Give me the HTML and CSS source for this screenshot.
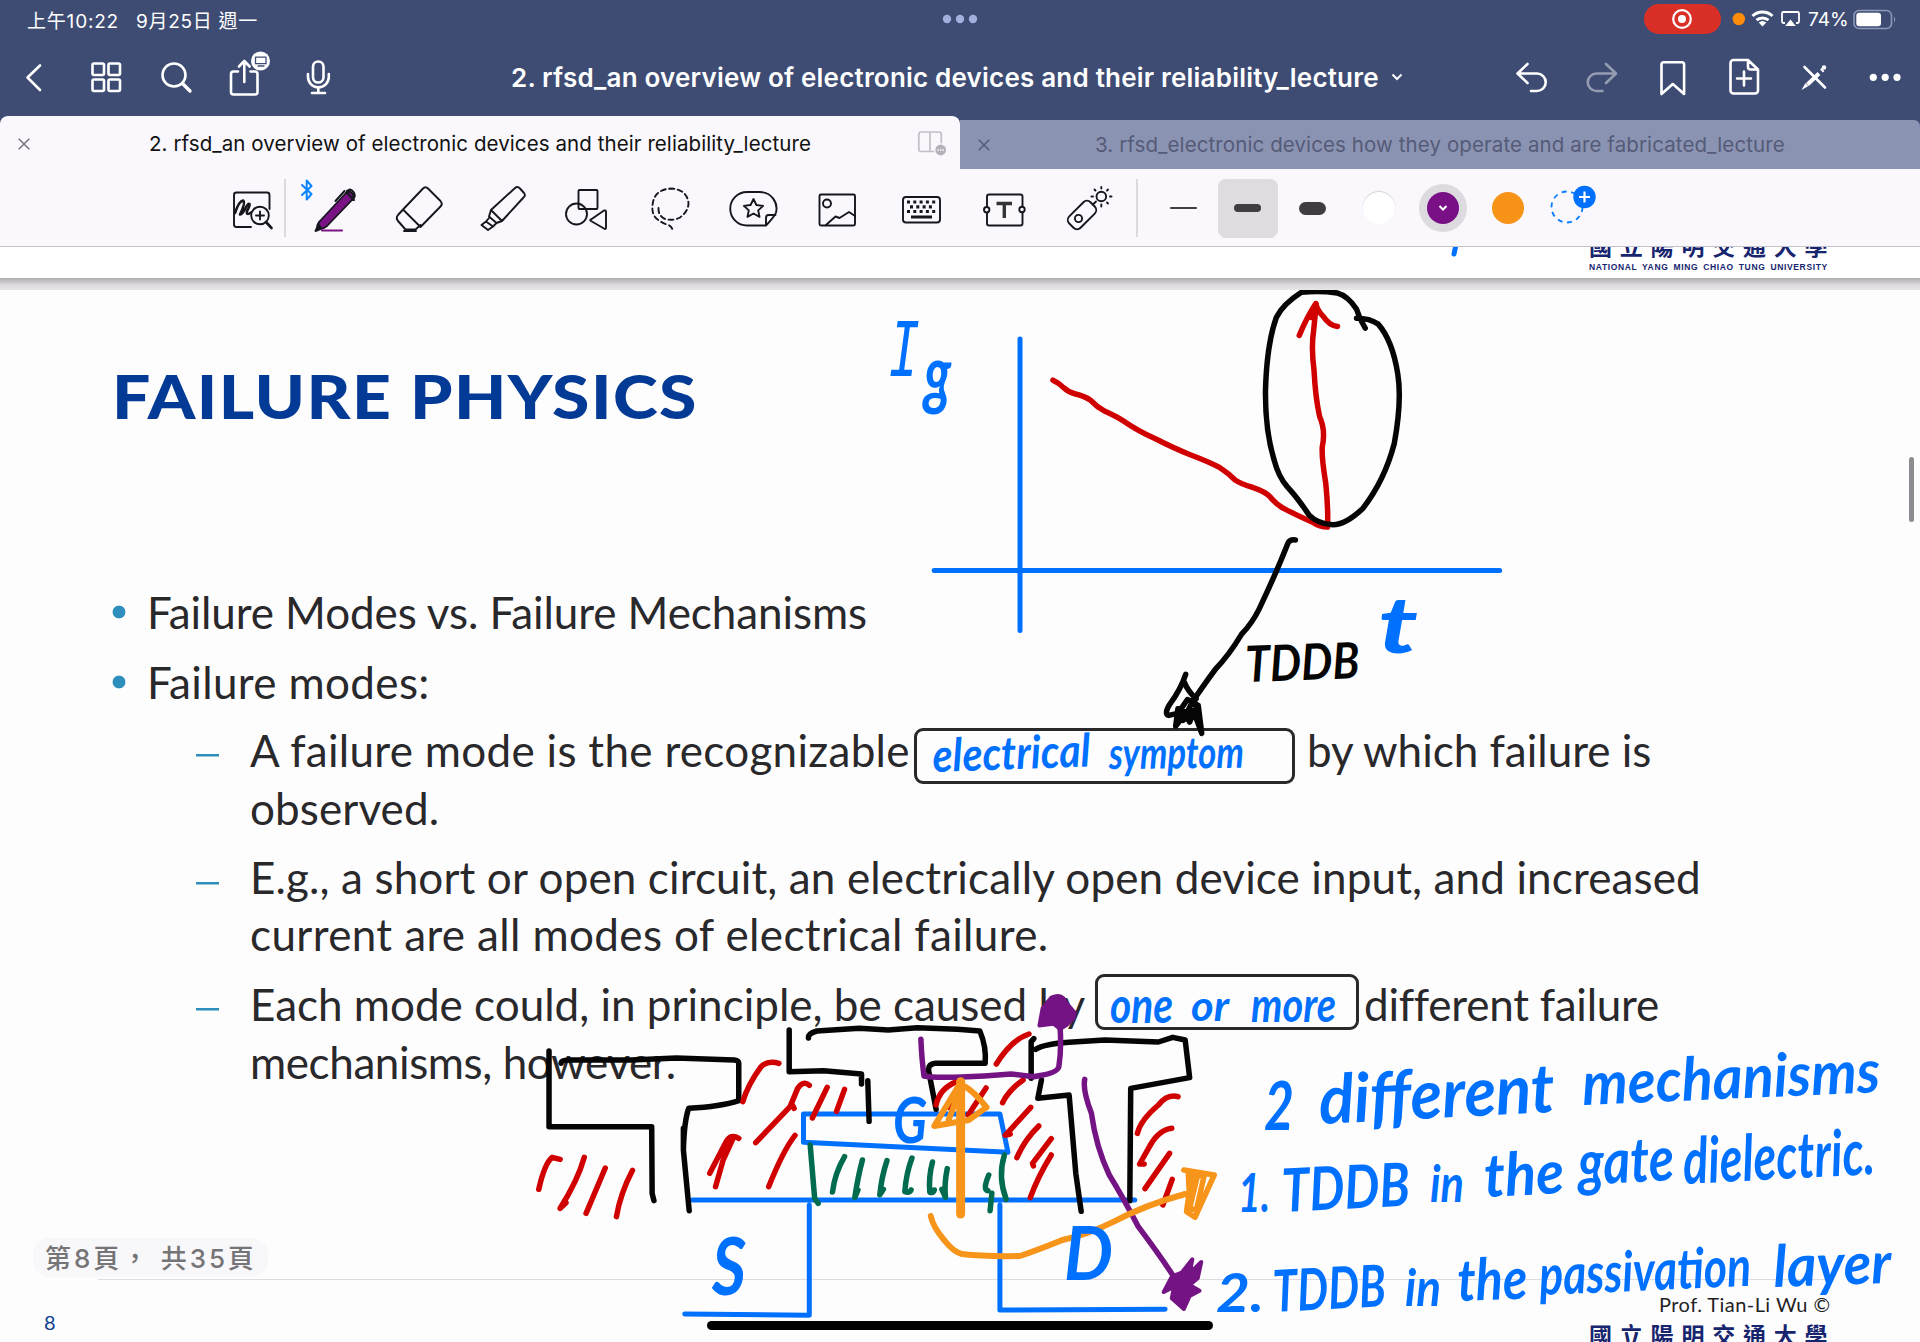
FILE: index.html
```html
<!DOCTYPE html>
<html lang="zh-Hant">
<head>
<meta charset="utf-8">
<title>2. rfsd_an overview of electronic devices and their reliability_lecture</title>
<link rel="stylesheet" href="styles.css">
</head>
<body>
<header class="topbar">
  <div class="status">
    <span class="clock">上午10:22</span><span class="date">9月25日 週一</span>
    <svg class="dots" viewBox="940 12 40 14" width="40" height="14" fill="#a3afdc"><circle cx="947" cy="19" r="4.2"/><circle cx="960" cy="19" r="4.2"/><circle cx="973" cy="19" r="4.2"/></svg>
    <span class="record"><svg viewBox="0 0 20 20" width="20" height="20"><circle cx="10" cy="10" r="8.8" fill="none" stroke="#fff" stroke-width="2.2"/><circle cx="10" cy="10" r="4" fill="#fff"/></svg></span>
    <svg class="signals" viewBox="1732 6 70 28" width="70" height="28">
      <circle cx="1738.8" cy="20" r="6.2" fill="#ff8c0a"/>
      <g fill="none" stroke="#fff" stroke-width="3"><path d="M1752.5 17a14.5 14.5 0 0 1 20 0"/><path d="M1756.5 21.2a9 9 0 0 1 12 0"/></g>
      <path d="M1758.700 23.600a6 6 0 0 1 7.600 0L1762.500 27.600z" fill="#fff"/>
      <path d="M1785 24h-1.500a1.500 1.500 0 0 1-1.500-1.500v-8a1.500 1.500 0 0 1 1.500-1.500h14a1.500 1.500 0 0 1 1.500 1.500v8a1.500 1.500 0 0 1-1.500 1.500h-1.500" fill="none" stroke="#fff" stroke-width="1.800"/>
      <path d="M1790.500 20.500l5.300 6.500h-10.600z" fill="#fff"/>
    </svg>
    <span class="percent">74%</span>
    <svg class="battery" viewBox="1852 9 46 21" width="46" height="21"><rect x="1854" y="10.500" width="37.500" height="18" rx="5" fill="none" stroke="#8f98b5" stroke-width="1.600"/><rect x="1856.300" y="12.800" width="24.700" height="13.400" rx="3" fill="#fff"/><path d="M1894 16.500q2.500 3 0 6z" fill="#8f98b5"/></svg>
  </div>
  <nav class="nav">
    <svg class="left-icons" viewBox="20 48 320 58" width="320" height="58" fill="none" stroke="#fff" stroke-width="2.600" stroke-linecap="round" stroke-linejoin="round">
      <path d="M40 65.500L27.500 77.500L40 90"/>
      <rect x="92.500" y="63.500" width="11.500" height="11.500" rx="1.500"/><rect x="108.500" y="63.500" width="11.500" height="11.500" rx="1.500"/><rect x="92.500" y="79.500" width="11.500" height="11.500" rx="1.500"/><rect x="108.500" y="79.500" width="11.500" height="11.500" rx="1.500"/>
      <circle cx="174" cy="75" r="11.500"/><path d="M182.500 83.500L190 91" stroke-width="3.400"/>
      <path d="M238 71.500h-4.500a2.500 2.500 0 0 0-2.500 2.500v18a2.500 2.500 0 0 0 2.500 2.500h21.500a2.500 2.500 0 0 0 2.500-2.500V74a2.500 2.500 0 0 0-2.500-2.500h-4.500M244.300 82V62M239 66.500L244.300 61L249.600 66.500"/>
      <circle cx="260.500" cy="61" r="9.500" fill="#fff" stroke="none"/><g stroke="#3e4c74" stroke-width="1.300"><rect x="255.500" y="57.200" width="10.500" height="6.500"/><path d="M258 66h6"/></g>
      <rect x="313" y="61.500" width="10.500" height="21" rx="5.250"/><path d="M308 74v3a10.400 10.400 0 0 0 20.800 0v-3M318.300 88v5M312 93h13"/>
    </svg>
    <h1 class="title">2. rfsd_an overview of electronic devices and their reliability_lecture</h1>
    <svg class="chev" viewBox="0 0 12 8" width="12" height="8" fill="none" stroke="#fff" stroke-width="2"><path d="M1.500 1.500L6 6l4.500-4.500"/></svg>
    <svg class="right-icons" viewBox="1505 48 405 58" width="405" height="58" fill="none" stroke="#fff" stroke-width="2.600" stroke-linecap="round" stroke-linejoin="round">
      <path d="M1527.500 64L1517.500 73.500L1527.500 83M1518 73.500h19a8.500 8.500 0 0 1 0 17.500h-6"/>
      <path opacity=".45" d="M1606 64L1616 73.500L1606 83M1615.500 73.500h-19a8.500 8.500 0 0 0 0 17.500h6"/>
      <path d="M1661.500 94V64.500a2.300 2.300 0 0 1 2.300-2.300h18a2.300 2.300 0 0 1 2.300 2.300V94L1672.800 84z"/>
      <path d="M1748 60h-14.500a3 3 0 0 0-3 3v27.500a3 3 0 0 0 3 3H1755a3 3 0 0 0 3-3V69.500zM1748 60v7a2.500 2.500 0 0 0 2.500 2.500h7.500M1744 71.500v14M1737 78.500h14"/>
      <path d="M1804.500 67L1825 87.500"/><path d="M1807.500 84.500L1819 73.500M1821.500 71L1823 69.500" stroke-width="4" stroke-linecap="butt"/><circle cx="1824" cy="67.500" r="2.200" fill="#fff" stroke="none"/><path d="M1805.500 83l3 3l-7 4z" fill="#fff" stroke="none"/>
      <g fill="#fff" stroke="none"><circle cx="1873.300" cy="77.300" r="3.600"/><circle cx="1885.200" cy="77.300" r="3.600"/><circle cx="1897" cy="77.300" r="3.600"/></g>
    </svg>
  </nav>
  <div class="tabs">
    <div class="tab active">
      <svg viewBox="0 0 12 12" width="12" height="12" stroke="#77757b" stroke-width="1.500"><path d="M.7.700l10.600 10.600M11.300.7L.7 11.300"/></svg>
      <span>2. rfsd_an overview of electronic devices and their reliability_lecture</span>
      <svg class="split" viewBox="918 129 32 30" width="32" height="30" fill="none" stroke="#c2c0c6" stroke-width="1.700"><rect x="920.800" y="132" width="22.500" height="19.500" rx="2.500"/><path d="M932 132v19"/><circle cx="942.700" cy="150" r="6.800" fill="#faf8fc" stroke="none"/><circle cx="942.700" cy="150" r="5.400" fill="#b4b2b8" stroke="none"/><path d="M939.500 150h1.400m1.100 0h1.400m1.100 0h1.400" stroke="#fff"/></svg>
    </div>
    <div class="tab idle">
      <svg viewBox="0 0 12 12" width="12" height="12" stroke="#555c7a" stroke-width="1.500"><path d="M.7.700l10.600 10.600M11.300.7L.7 11.300"/></svg>
      <span>3. rfsd_electronic devices how they operate and are fabricated_lecture</span>
    </div>
  </div>
</header>

<div class="tools">
  <svg class="tool first" viewBox="222 178 60 60"><path d="M251 227h-14.500a2.500 2.500 0 0 1-2.500-2.500v-29.500a2.500 2.500 0 0 1 2.500-2.500h30.500a2.500 2.500 0 0 1 2.500 2.500V209"/><path d="M235 213Q239 201 243 200.500Q246 202 240 214.500Q242 215 245 209Q248 203 249.500 204Q250 206 247 211Q246 216 251 212.500" stroke-width="2.600"/><circle cx="260" cy="215.500" r="8.800" fill="#faf8fc"/><path d="M266 222l5.500 6" stroke-width="2.600"/><path d="M256 215.500h8M260 211.500v8"/></svg>
  <i class="divider"></i>
  <svg class="tool" viewBox="306 178 60 60"><path d="M302 185l9.500 9-4.800 5.500v-19l4.800 5.500-9.500 9" stroke="#0a84ff" stroke-width="2"/><path d="M318 229Q316 225 320 221L345 194Q348 190 352 193Q355 196 352 200L327 226Q322 230 318 229Z" fill="#7a1285" stroke-width="1.800"/><path d="M318.500 224.500L315.500 231l6-2.500z" fill="#111"/><path d="M346.500 192.500l7.500 7.500M347 191l3-1.500q5 2 4.700 7l-2 3.500M335.500 201l9-10" stroke-width="2"/><path d="M322 230.500h20" stroke="#7a1285" stroke-width="2"/></svg>
  <svg class="tool" viewBox="390 178 60 60"><path d="M403 209.500L423 188.500Q425.500 186 428 188.500L440.500 201Q443 204 440.500 206.500L420.500 227zM403 209.500L398 215Q395.500 218 398 221L405.500 229.500H415.500L420.500 225M404 231h12"/></svg>
  <svg class="tool" viewBox="474 178 60 60"><path d="M491 210L515 188Q517.500 186 520 188.500L524 193Q526 195.500 523.500 197.500L502 221zM491 210L489 216.500L496.500 223L502 221M489 218L486 221.500M496.500 223L493 226.500M486 221.500L481.500 225L488 230L493 226.500z"/></svg>
  <svg class="tool" viewBox="558 178 60 60"><rect x="578.500" y="190" width="19" height="19" rx="1"/><circle cx="576.500" cy="214" r="10.500"/><path d="M591 219.500L604 210.500Q606 210 606 212V227.500Q606 230 604 228.500L591 221Q589.500 220 591 219.500Z"/></svg>
  <svg class="tool" viewBox="642 178 60 60"><path d="M658.500 208Q658 215 664 218.500Q672 221.500 680 217.500Q688.500 211 688.500 203Q687 190 672 188.500Q657 189 653.500 200Q650 213 657 219Q662 223 667 224.500Q672 226 672.500 230" stroke-dasharray="5 3.500"/></svg>
  <svg class="tool" viewBox="726 178 60 60"><path d="M766 225.500H747a16.500 16.500 0 0 1 0-33.500h13a16.500 16.500 0 0 1 16 20.500Q775 216 766 225.500zM766 225.500V218q0-3 2.500-3h7M753.500 199l2.900 6 6.700.9-4.900 4.500 1.300 6.400-6-3.300-6 3.300 1.300-6.400-4.900-4.500 6.700-.9z"/></svg>
  <svg class="tool" viewBox="810 178 60 60"><rect x="819.500" y="194.500" width="35.500" height="31" rx="1.500"/><circle cx="827" cy="203.500" r="4"/><path d="M826 225l9.500-8.500 4 1.500 9.500-6 6 4"/></svg>
  <svg class="tool" viewBox="894 178 60 60"><rect x="903" y="197" width="37" height="25.500" rx="3"/><path d="M907 202h28.500M907 211.500h28.500" stroke-dasharray="3 3.300" stroke-width="3.200" stroke-linecap="butt"/><path d="M910 206.800h24" stroke-dasharray="3 3.300" stroke-width="3.200" stroke-linecap="butt"/><path d="M911 217h21" stroke-width="3" stroke-linecap="butt"/></svg>
  <svg class="tool" viewBox="978 178 60 60"><path d="M987 206v-9.500a2 2 0 0 1 2-2h31.500a2 2 0 0 1 2 2V206M987 213v10.500a2 2 0 0 0 2 2h31.500a2 2 0 0 0 2-2V213"/><circle cx="986.700" cy="209.700" r="2.700"/><circle cx="1022" cy="209.500" r="2.700"/><path d="M996.500 203.500h15.500M1004.300 203.500v14.500" stroke-width="3.400" stroke-linecap="butt" stroke="#333"/></svg>
  <svg class="tool" viewBox="1062 178 60 60"><rect x="1067" y="207" width="30" height="16" rx="5" transform="rotate(-45 1082 215)"/><circle cx="1078.500" cy="218.500" r="3.600"/><circle cx="1101.300" cy="196.500" r="4.800"/><path d="M1101.300 187v1.500M1101.300 204.500v2M1091.500 196.500h1.500M1110 196.500h1.500M1094.500 189.500l1 1M1108 189.500l-1 1M1108 203.500l-1-1M1096 201.500l-3 3"/></svg>
  <i class="divider second"></i>
  <span class="width thin"><b></b></span><span class="width mid"><b></b></span><span class="width thick"><b></b></span>
  <span class="swatch white"><b></b></span>
  <span class="swatch purple"><b><svg viewBox="0 0 10 8" width="10" height="8" fill="none" stroke="#fff" stroke-width="2"><path d="M1.500 2L5 5.500L8.500 2"/></svg></b></span>
  <span class="swatch orange"><b></b></span>
  <svg class="add" viewBox="1549 178 60 60" width="60" height="60"><circle cx="1568" cy="207" r="15.500" fill="none" stroke="#0a7cff" stroke-width="1.800" stroke-dasharray="5 4.600"/><circle cx="1585.500" cy="197" r="11.200" fill="#0070ff"/><path d="M1580 197h11M1585.500 191.500v11" stroke="#fff" stroke-width="2.200"/></svg>
</div>

<section class="previous">
  <svg class="tick" viewBox="0 0 8 12" width="8" height="12"><path d="M5 -2L3 7" stroke="#0070ff" stroke-width="5" stroke-linecap="round"/></svg>
  <div class="logo"><span class="zh">國立陽明交通大學</span><span class="en">NATIONAL YANG MING CHIAO TUNG UNIVERSITY</span></div>
</section>
<div class="gap"></div>

<main class="slide">
  <h2>FAILURE PHYSICS</h2>
  <ul class="points">
    <li class="l1">Failure Modes vs. Failure Mechanisms</li>
    <li class="l2">Failure modes:</li>
  </ul>
  <ul class="subpoints">
    <li><div class="line"><span class="a1">A failure mode is the recognizable</span><span class="blank one"></span><span class="a2">by which failure is</span></div><div class="line a3">observed.</div></li>
    <li class="tight"><div class="line b1">E.g., a short or open circuit, an electrically open device input, and increased</div><div class="line b2">current are all modes of electrical failure.</div></li>
    <li><div class="line"><span class="c1">Each mode could, in principle, be caused by</span><span class="blank two"></span><span class="c2">different failure</span></div><div class="line c3">mechanisms, however.</div></li>
  </ul>
  <div class="pager">第8頁， 共35頁</div>
  <footer class="foot">
    <span class="num">8</span>
    <div class="credit"><span class="prof">Prof. Tian-Li Wu ©</span><span class="zh">國立陽明交通大學</span></div>
  </footer>

  <svg class="ink" viewBox="0 290 1920 1052" width="1920" height="1052">
    <!-- gate current over time -->
    <g transform="translate(860 281) scale(.43367 .33163)">
      <g stroke="#0070ff" stroke-width="5"><path d="M369 175V1054M171 873H1475"/></g>
      <g stroke="#d00000" stroke-width="5.500"><path d="M445 299Q460 308 470 322Q480 335 495 340Q520 348 532 360Q546 380 565 393Q590 408 605 420Q640 452 680 475Q725 505 760 523Q810 548 830 563Q850 580 865 600Q880 613 905 622Q935 635 945 650Q960 675 980 688Q1020 715 1045 728Q1060 742 1078 742Q1080 690 1074 610Q1064 530 1066 500Q1074 450 1060 410Q1050 350 1047 270Q1040 200 1046 150L1052 70"/><path d="M1013 164Q1030 110 1051 68L1040 110M1051 68Q1055 90 1068 106Q1082 134 1101 137"/></g>
      <path stroke-width="5.500" d="M1165 142Q1152 115 1145 85Q1125 45 1100 36Q1060 28 1018 34Q975 70 960 110Q938 190 935 330Q934 450 955 540Q965 590 985 620Q1010 655 1035 705Q1055 732 1090 735Q1120 735 1160 685Q1210 600 1232 490Q1250 360 1240 280Q1228 180 1195 130Q1175 112 1145 112"/>
      <path stroke-width="5.500" d="M1004 781Q992 778 987 790Q960 880 920 990Q905 1030 880 1065Q850 1130 820 1170Q800 1205 770 1262"/>
      <path stroke-width="5.500" d="M751 1186Q740 1230 715 1275Q700 1305 712 1310L745 1300M748 1210Q755 1235 775 1260M733 1290L728 1342L750 1305L760 1330L770 1300L788 1364L780 1280L755 1262L735 1300L775 1295L745 1325L770 1260L782 1320"/>
    </g>
    <!-- device cross-section -->
    <g transform="translate(520 960) scale(.44643 .33333)">
      <g stroke="#0070ff" stroke-width="5"><path d="M386 720H1377M369 1062L648 1066V735M1075 735V1050L1445 1048M635 547V462H1075L1093 577L635 547"/></g>
      <g stroke="#006b4e" stroke-width="5.500"><path d="M650 555L660 715L668 730M727 590Q705 640 700 696M767 600Q757 650 750 712M750 712L757 690M822 602Q810 650 806 704L814 688M878 594Q865 640 862 695Q872 700 876 690M924 606Q915 650 918 697Q926 700 928 690M957 626Q950 670 953 712L945 688M1050 645Q1036 690 1048 692M1057 700L1053 752M1085 585Q1070 650 1089 718"/></g>
      <g stroke-width="5.500"><path d="M65 273V500H295L296 700L300 722M92 310Q92 300 110 300H250L350 294L480 300Q490 302 490 310V422Q450 440 378 445Q368 480 366 570L379 752M366 505V570"/>
      <path d="M603 210V335L680 332L765 342V372M779 362L782 484M646 234Q645 220 665 213L760 205L825 210L890 203L980 208L1030 213Q1045 260 1042 310H930Q915 312 915 330L932 448"/>
      <path d="M1151 236L1145 245V355M1155 268Q1175 252 1230 247L1310 240L1430 246L1462 232L1490 240L1500 353L1368 385L1366 722M1168 360L1160 415L1230 405L1245 640L1257 754"/></g>
      <g stroke="#d00000" stroke-width="5.500"><path d="M42 688Q55 610 72 592L90 598M144 592Q130 660 90 745L103 728M191 624Q170 690 148 760M252 631Q225 700 216 770M580 310Q555 300 540 320Q510 375 499 425M648 376Q635 360 622 385L605 440L528 548M608 430L614 445M616 526Q590 570 557 680M490 535Q472 520 462 545L425 640M478 533L455 600L438 680M688 382L655 474M727 388L709 454M1067 312Q1100 240 1140 222M1127 360Q1095 390 1081 428M978 365Q940 385 932 435M990 380L962 443M1044 384L1004 465M1144 442L1087 526L1098 522M1162 498Q1130 540 1113 593M1190 536L1148 610L1150 618M1190 585Q1160 650 1143 713M1474 410Q1450 400 1430 435Q1390 480 1383 520M1460 505Q1430 510 1410 560L1388 612L1398 612M1455 580L1400 686M1461 658L1440 735"/></g>
      <g stroke="#741383" stroke-width="5.500"><path d="M898 238Q900 300 905 348Q930 356 1040 348L1100 342L1150 350Q1205 340 1207 320Q1213 270 1210 205M1265 358Q1260 390 1280 460Q1290 560 1320 645Q1350 710 1385 800Q1430 880 1462 945L1480 1000"/></g>
      <path fill="#741383" stroke="#741383" stroke-width="3.500" d="M1163 197L1170 145L1190 112Q1215 98 1222 125L1243 158L1240 175L1225 195L1210 208L1195 192Z"/>
      <path fill="#741383" stroke="#741383" stroke-width="4" d="M1442 996L1460 950L1482 938L1506 898L1500 940L1526 906L1518 955L1500 975L1522 992L1500 1008L1487 1047L1460 1015L1465 980Z"/>
      <g stroke="#f7941a"><path stroke-width="9" d="M987 365V762"/><path stroke-width="6" d="M987 368L928 498L1005 480L1045 442Q1015 390 990 375L960 480M920 768Q925 800 950 840Q970 875 990 882Q1040 890 1120 888Q1160 870 1215 840Q1270 825 1330 785Q1400 735 1490 702"/><path stroke-width="5.500" d="M1487 630L1555 645L1512 772L1493 755L1505 640L1532 650L1515 750L1500 745L1517 650M1497 640L1501 750"/></g>
    </g>
    <!-- handwritten notes -->
    <g class="note">
      <text x="889" y="376" font-size="74" textLength="31" class="mono">I</text><text x="924" y="400" font-size="76" textLength="27">g</text>
      <text x="1378" y="653" font-size="78" textLength="40">t</text>
      <text class="black" x="1246" y="682" font-size="50" textLength="114" transform="rotate(-2 1246 682)">TDDB</text>
      <text x="933" y="772" font-size="46" textLength="158" transform="rotate(-2 933 772)">electrical</text>
      <text x="1109" y="769" font-size="44" textLength="135" transform="rotate(-.5 1109 769)">symptom</text>
      <text x="1110" y="1023" font-size="50" textLength="63">one</text><text x="1191" y="1021" font-size="42" textLength="38">or</text><text x="1251" y="1022" font-size="48" textLength="85">more</text>
      <text x="712" y="1295" font-size="80" textLength="34">S</text><text x="893" y="1143" font-size="64" textLength="34">G</text><text x="1064" y="1280" font-size="74" textLength="49">D</text>
      <text x="1264" y="1130" font-size="66" textLength="30">2</text>
      <text x="1320" y="1124" font-size="68" textLength="236" transform="rotate(-3 1320 1124)">different</text>
      <text x="1583" y="1105" font-size="60" textLength="298" transform="rotate(-2.500 1583 1105)">mechanisms</text>
      <text x="1238" y="1212" font-size="54" textLength="32">1.</text><text x="1283" y="1212" font-size="60" textLength="128" transform="rotate(-3 1283 1212)">TDDB</text><text x="1430" y="1202" font-size="52" textLength="34">in</text><text x="1485" y="1197" font-size="60" textLength="80" transform="rotate(-3 1485 1197)">the</text><text x="1579" y="1185" font-size="62" textLength="96" transform="rotate(-3 1579 1185)">gate</text><text x="1684" y="1184" font-size="64" textLength="192" transform="rotate(-3 1684 1184)">dielectric.</text>
      <text x="1216" y="1312" font-size="54" textLength="48">2.</text><text x="1274" y="1312" font-size="58" textLength="113" transform="rotate(-3 1274 1312)">TDDB</text><text x="1405" y="1306" font-size="52" textLength="36">in</text><text x="1458" y="1301" font-size="58" textLength="70" transform="rotate(-2 1458 1301)">the</text><text x="1540" y="1295" font-size="56" textLength="212" transform="rotate(-2.500 1540 1295)">passivation</text><text x="1774" y="1287" font-size="58" textLength="118" transform="rotate(-2 1774 1287)">layer</text>
    </g>
    <rect x="707" y="1321" width="506" height="9" rx="4.500" fill="#000" stroke="none"/>
  </svg>
  <i class="scroll"></i>
</main>
<script src="ink.js"></script>
</body>
</html>
```
FILE: ink.js
```js
// Stretch the note glyphs, not only the gaps between them, to each word's length.
document.querySelectorAll('.note text').forEach(function (word) {
  word.setAttribute('lengthAdjust', 'spacingAndGlyphs');
});
```
FILE: styles.css
```css
* { box-sizing: border-box; }
body { margin: 0; width: 1920px; height: 1342px; overflow: hidden; background: #fefdfe; font-family: Inter, "Noto Sans CJK TC", sans-serif; display: flex; flex-direction: column; }
svg { display: block; flex: none; }
h1, h2, ul { margin: 0; padding: 0; }
ul { list-style: none; }

.topbar { background: #3e4c74; height: 169px; flex: none; display: flex; flex-direction: column; }
.status { height: 48px; padding: 0 22px 10px 27px; display: flex; align-items: center; color: #fff; font-size: 19px; white-space: nowrap; }
.clock { width: 109px; letter-spacing: .8px; }
.date { width: 804px; letter-spacing: .7px; }
.record { width: 77px; height: 30px; border-radius: 15px; background: #d92f27; margin-left: 664px; display: flex; align-items: center; justify-content: center; padding-right: 1px; }
.signals { margin-left: 11px; }
.percent { width: 50px; padding-left: 6px; font-size: 19px; }
.nav { height: 58px; padding: 0 10px 0 20px; display: flex; align-items: center; color: #fff; }
.title { width: 867px; margin-left: 171px; padding-top: 1px; font-size: 26px; font-weight: 600; white-space: nowrap; line-height: 36px; letter-spacing: .2px; }
.chev { margin-left: 13px; }
.right-icons { margin-left: 102px; }
.tabs { flex: 1; margin-top: 10px; display: flex; align-items: flex-end; }
.tab { width: 960px; display: flex; align-items: center; font-size: 20.500px; letter-spacing: .1px; white-space: nowrap; }
.tab.active { height: 53px; padding: 2px 12px 0 18px; border-radius: 8px 8px 0 0; background: #faf8fc; color: #111; }
.tab.active span { width: 772px; margin-left: 119px; letter-spacing: .08px; }
.tab.idle { height: 49px; padding-left: 18px; background: #8b93b2; color: #555b78; border-top-right-radius: 6px; }
.tab.idle span { margin-left: 105px; }

.tools { height: 78px; flex: none; padding: 9px 0 8px 222px; display: flex; background: #faf8fc; border-bottom: 1.500px solid #c5c3c8; align-items: center; }
.tool { width: 60px; height: 60px; margin-right: 24px; overflow: visible; fill: none; stroke: #16161e; stroke-width: 1.900; stroke-linecap: round; stroke-linejoin: round; }
.tool.first { margin-right: 2px; }
.divider { width: 1.500px; height: 58px; margin-right: 20.500px; background: #dcdadf; }
.divider.second { margin: 0 15.500px 0 -10px; }
.width { width: 60px; height: 59px; margin-right: 4.500px; border-radius: 8px; display: flex; align-items: center; justify-content: center; }
.width b { width: 27px; border-radius: 7px; background: #3f3d41; }
.thin b { height: 2.500px; }
.mid { background: #dedce1; }
.mid b { height: 8px; }
.thick b { height: 13px; }
.swatch { width: 48px; height: 48px; border-radius: 50%; margin-right: 16.500px; display: flex; align-items: center; justify-content: center; }
.swatch b { width: 32px; height: 32px; border-radius: 50%; display: flex; align-items: center; justify-content: center; }
.swatch.white { margin-left: 8px; }
.white b { background: #fff; box-shadow: 0 -1px 1px #d5d3d8; }
.purple { background: #dddbe0; }
.purple b { background: #7a1085; }
.orange b { background: #f79417; }

.previous { height: 31px; flex: none; display: flex; align-items: flex-start; overflow: hidden; background: #fff; }
.tick { margin-left: 1451px; }
.logo { margin: -15px 0 0 130px; display: flex; flex-direction: column; color: #17256f; }
.zh { font: 700 23px/26px "Noto Sans CJK TC", sans-serif; letter-spacing: 7.800px; white-space: nowrap; }
.en { margin-top: 4px; font: 700 8.500px/10px "Liberation Sans", sans-serif; letter-spacing: .64px; word-spacing: 2px; white-space: nowrap; }
.gap { height: 12px; flex: none; background: linear-gradient(#aeacb0, #dddbde 60%, #e8e6e9); }

.slide { position: relative; flex: 1; padding: 76px 0 0 112px; font-family: Lato, sans-serif; color: #29282b; }
h2 { width: max-content; font-size: 60px; line-height: 60px; font-weight: 900; color: #023a96; white-space: nowrap; letter-spacing: 1.300px; transform: scaleX(1.13); transform-origin: 0 0; }
.points { margin-top: 157px; font-size: 44px; }
.points li { height: 58px; line-height: 58px; margin-bottom: 12px; padding-left: 35px; white-space: nowrap; background: radial-gradient(circle at 7px 29px, #2e8fbd 6px, transparent 6.800px); }
.l1 { letter-spacing: -.08px; }
.l2 { letter-spacing: .35px; }
.subpoints { margin-top: -2px; padding-left: 83px; font-size: 44px; display: grid; gap: 12px; }
.subpoints li { padding-left: 55px; background: linear-gradient(#2e8fbd, #2e8fbd) 1px 33px / 23px 2.500px no-repeat; }
.line { display: flex; height: 58px; line-height: 58px; white-space: nowrap; }
.tight .line { height: 57px; line-height: 57px; }
.blank { flex: none; height: 56px; border: 3.500px solid #29282b; border-radius: 9px; margin-top: 7px; }
.a1 { width: 664px; letter-spacing: .3px; }
.a3 { letter-spacing: .1px; }
.b1 { letter-spacing: .13px; }
.b2 { letter-spacing: .37px; }
.one { width: 381px; margin-right: 12px; }
.c1 { width: 845px; }
.two { width: 264px; margin: -1px 5px 0 0; }
.c2 { letter-spacing: -.25px; }
.c3 { letter-spacing: -.4px; }

.pager { position: absolute; left: 33px; top: 948px; width: 235px; height: 39px; padding-left: 12px; border-radius: 16px; background: #f8f7fa; color: #757476; font: 500 26px/41px Inter, "Noto Sans CJK TC", sans-serif; letter-spacing: 2.900px; white-space: nowrap; }
.foot { position: absolute; left: 98px; right: 88px; top: 989px; height: 63px; border-top: 1.500px solid #dddce0; }
.num { position: absolute; left: -54px; top: 29px; font: 20px/26px Lato, sans-serif; color: #0b3d91; }
.credit { position: absolute; left: 1491px; top: 12px; display: flex; flex-direction: column; white-space: nowrap; }
.prof { font-size: 20px; line-height: 24px; padding-left: 70px; color: #222; letter-spacing: .45px; }
.credit .zh { color: #17256f; margin-top: 5px; }
.ink { position: absolute; left: 0; top: 0; fill: none; stroke: #050505; stroke-linecap: round; stroke-linejoin: round; }
.ink path { vector-effect: non-scaling-stroke; }
.note text { fill: #0070ff; stroke: none; font-family: Lato, sans-serif; font-style: italic; font-weight: 700; }
.note .black { fill: #050505; }
.note .mono { font-family: "DejaVu Sans Mono", monospace; font-weight: 400; }
.scroll { position: absolute; left: 1909px; top: 167px; width: 5px; height: 65px; border-radius: 3px; background: #8d8c90; }
```
